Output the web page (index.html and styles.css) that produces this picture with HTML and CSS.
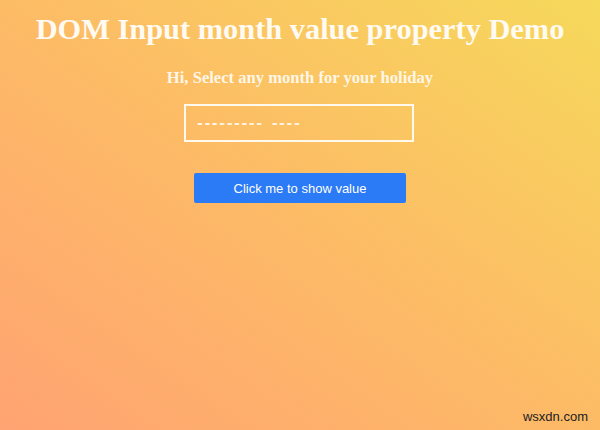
FILE: index.html
```html
<!DOCTYPE html>
<html>
<head>
<meta charset="utf-8">
<link rel="stylesheet" href="styles.css">
</head>
<body>
<div class="page">
  <h1 class="title">DOM Input month value property Demo</h1>
  <p class="subtitle">Hi, Select any month for your holiday</p>
  <div class="month-input"><span class="ph">---------</span><span class="ph ph2">----</span></div>
  <button class="btn">Click me to show value</button>
  <div class="watermark">wsxdn.com</div>
</div>
</body>
</html>
```
FILE: styles.css
```css
html, body {
  margin: 0;
  padding: 0;
  width: 600px;
  height: 430px;
  overflow: hidden;
}
.page {
  position: relative;
  width: 600px;
  height: 430px;
  background: linear-gradient(35deg, #ffa372 0%, #fdbb66 50%, #f6d95b 100%);
  display: flex;
  flex-direction: column;
  align-items: center;
  font-family: "Liberation Serif", serif;
}
.title {
  margin: 11px 0 0;
  font-size: 30.4px;
  font-weight: bold;
  color: #fffaf2;
  line-height: 36px;
}
.subtitle {
  margin: 21px 0 0;
  font-size: 16.6px;
  font-weight: bold;
  color: #fff6e6;
  line-height: 19px;
}
.month-input {
  margin-top: 17px;
  margin-left: -2px;
  width: 230px;
  height: 38px;
  box-sizing: border-box;
  border: 2px solid #fff9ee;
  display: flex;
  align-items: center;
  padding-left: 11px;
  font-family: "DejaVu Sans", sans-serif;
  font-size: 14px;
  font-weight: bold;
  color: #fff3e0;
  letter-spacing: 1.6px;
}
.ph2 { margin-left: 8px; }
.btn {
  margin-top: 31px;
  width: 212px;
  height: 30px;
  border: none;
  border-radius: 2px;
  background: #2b7af6;
  color: #fff;
  font-family: "Liberation Sans", sans-serif;
  font-size: 13px;
  padding: 0;
}
.watermark {
  position: absolute;
  right: 12px;
  bottom: 6px;
  font-family: "Liberation Sans", sans-serif;
  font-size: 13px;
  color: #222;
}
```
